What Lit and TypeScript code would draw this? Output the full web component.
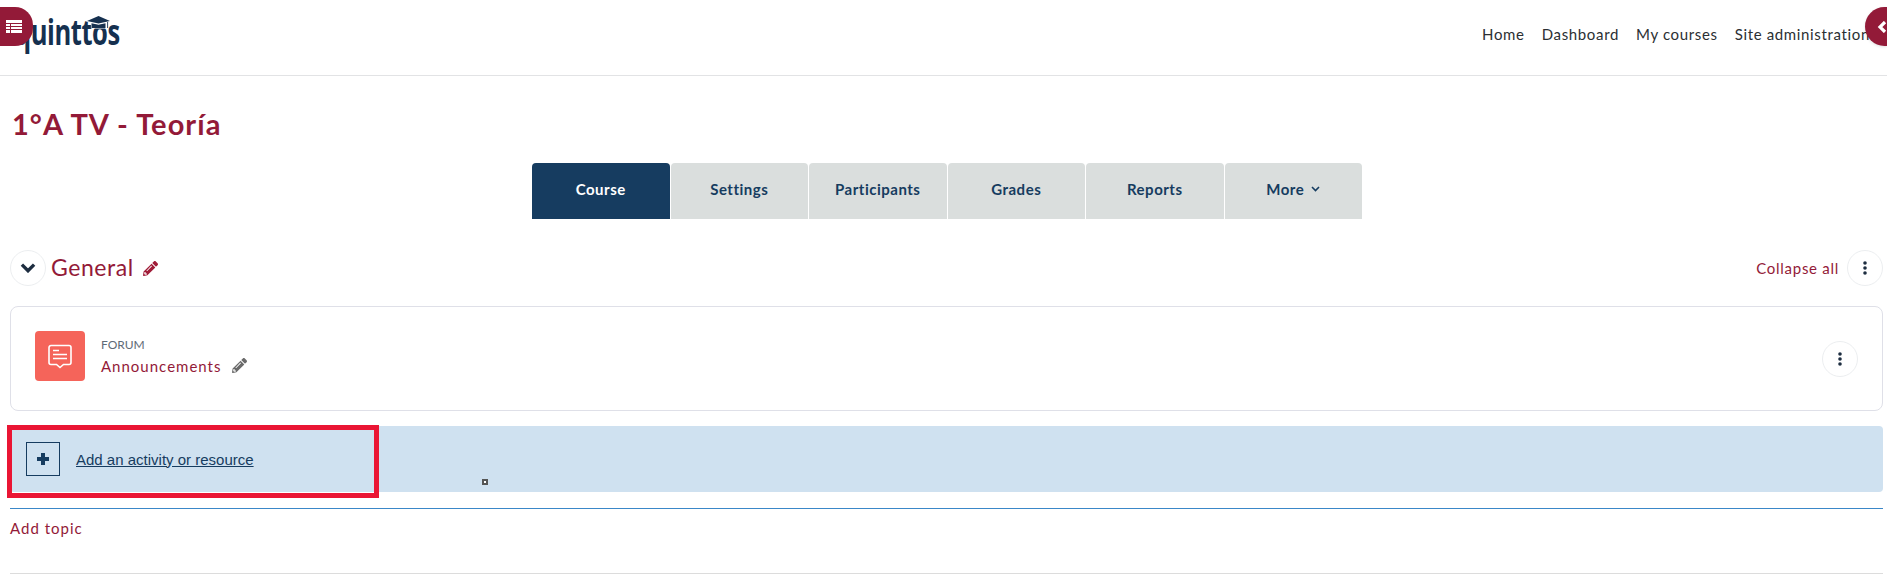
import { LitElement, html, css } from "lit";
import { customElement } from "lit/decorators.js";

const PENCIL = "M497.9 142.1l-46.1 46.1c-4.7 4.7-12.3 4.7-17 0l-111-111c-4.7-4.7-4.7-12.3 0-17l46.1-46.1c18.7-18.7 49.1-18.7 67.9 0l60.1 60.1c18.8 18.7 18.8 49.1 0 67.9zM284.2 99.8L21.6 362.4.4 483.9c-2.9 16.4 11.4 30.6 27.8 27.8l121.5-21.3 262.6-262.6c4.7-4.7 4.7-12.3 0-17l-111-111c-4.8-4.7-12.4-4.7-17.1 0zM124.1 339.9c-5.5-5.5-5.5-14.3 0-19.8l154-154c5.5-5.5 14.3-5.5 19.8 0s5.5 14.3 0 19.8l-154 154c-5.5 5.5-14.3 5.5-19.8 0zM88 424h48v36.3l-64.5 11.3-31.1-31.1L51.7 376H88v48z";

const pencil = (cls: string) => html`<svg class=${cls} viewBox="0 0 512 512" aria-hidden="true"><path fill="currentColor" d=${PENCIL}></path></svg>`;
const kebab = html`<svg class="kebab" viewBox="0 0 4 14" aria-hidden="true"><circle cx="2" cy="2" r="1.8"></circle><circle cx="2" cy="7" r="1.8"></circle><circle cx="2" cy="12" r="1.8"></circle></svg>`;

@customElement("app-root")
export class AppRoot extends LitElement {
  static styles = css`
    :host { display: block; position: relative; width: 1887px; height: 585px; overflow: hidden; background: #fff;
      font-family: "Lato", "Open Sans", sans-serif; color: #2b2f33; }
    .header { display: flex; align-items: center; justify-content: space-between; height: 75px; border-bottom: 1px solid #e2e3e5; box-sizing: content-box; padding: 0 17px 0 15px; }
    .logo { position: relative; width: 104px; height: 40px; margin-top: -12px; }
    .logo-text { display: block; font-family: "Open Sans", sans-serif; font-weight: 700; font-size: 35px; line-height: 40px; color: #15304f; letter-spacing: -0.6px; transform: scaleX(0.73); transform-origin: left center; white-space: nowrap; }
    .hat { position: absolute; left: 72px; top: 4px; width: 23px; height: 15px; overflow: visible; }
    .hat path { stroke: #fff; stroke-width: 1.2px; paint-order: stroke; }
    nav { display: flex; gap: 17px; font-size: 15px; letter-spacing: 0.65px; margin-top: -7px; white-space: nowrap; }
    main { padding: 0 4px 0 10px; }
    h1 { margin: 0; padding: 7px 0 0 2px; box-sizing: border-box; height: 87px; display: flex; align-items: center; font-size: 29px; font-weight: 700; letter-spacing: 1.05px; color: #931a38; }
    .tabs { display: flex; gap: 1px; width: 830px; margin-left: 522px; height: 56px; }
    .tab { flex: 1; display: flex; align-items: center; justify-content: center; gap: 7px; background: #dadedd; color: #163c60; font-weight: 700; font-size: 15px; letter-spacing: 0.5px; border-radius: 4px 4px 0 0; padding-bottom: 4px; box-sizing: border-box; }
    .tab.active { background: #163c60; color: #fff; }
    .chev-sm { width: 9px; height: 6px; }
    .section-head { display: flex; align-items: center; height: 36px; margin-top: 31px; }
    .circle { width: 36px; height: 36px; box-sizing: border-box; border: 1px solid #eceef0; border-radius: 50%; display: flex; align-items: center; justify-content: center; background: #fff; flex: none; }
    .general { margin-left: 5px; font-size: 23px; letter-spacing: 0.55px; color: #931a38; margin-top: -3px; }
    .pencil-red { width: 15px; height: 15px; margin-left: 9px; color: #a01c38; }
    .spacer { flex: 1; }
    .collapse { font-size: 15px; letter-spacing: 0.72px; color: #931a38; margin-right: 8px; }
    .kebab { width: 4px; height: 14px; fill: #1d2d40; }
    .card { display: flex; align-items: center; height: 105px; box-sizing: border-box; margin-top: 20px; border: 1px solid #dfe0e8; border-radius: 8px; padding: 0 24px 5px 24px; }
    .card .circle { margin-top: 5px; }
    .activity { width: 50px; height: 50px; border-radius: 4px; background: #f5645a; display: flex; align-items: center; justify-content: center; flex: none; }
    .activity svg { width: 26px; height: 26px; }
    .info { margin-left: 16px; display: flex; flex-direction: column; gap: 4px; }
    .type { font-size: 12px; line-height: 15px; color: #5f6b76; }
    .title { display: flex; align-items: center; font-size: 15px; line-height: 20px; letter-spacing: 1px; color: #931a38; }
    .pencil-grey { width: 15px; height: 15px; margin-left: 11px; color: #6a6a6a; }
    .add { display: flex; align-items: center; height: 66px; margin-top: 15px; background: #cfe1f0; border-radius: 4px; padding-left: 16px; font-family: "Liberation Sans", Arial, sans-serif; }
    .plus { width: 34px; height: 34px; box-sizing: border-box; border: 1px solid #163c60; display: flex; align-items: center; justify-content: center; }
    .plus svg { width: 14px; height: 14px; }
    .add a { margin-left: 16px; font-size: 15px; color: #163c60; text-decoration: underline; }
    .rule { height: 1px; background: #3a87c8; margin-top: 16px; }
    .add-topic { height: 38px; display: flex; align-items: center; font-size: 15px; letter-spacing: 1px; color: #931a38; }
    .rule2 { height: 1px; background: #dcdcdc; margin-top: 26px; }
    .side { position: absolute; top: 7px; height: 39px; background: #931a38; display: flex; align-items: center; }
    .side.left { left: 0; width: 33px; border-radius: 0 18px 18px 0; padding-left: 6px; box-sizing: border-box; }
    .side.right { right: 0; width: 22px; border-radius: 20px 0 0 20px; padding-left: 12px; box-sizing: border-box; box-shadow: 0 1px 3px rgba(0,0,0,.12); }
    .side.left svg { width: 16px; height: 13px; }
    .side.right svg { width: 10px; height: 12px; flex: none; }
    .highlight { position: absolute; left: 7px; top: 425px; width: 372px; height: 73px; box-sizing: border-box; border: 5px solid #ea1534; }
    .cursor { position: absolute; left: 482px; top: 479px; width: 6px; height: 6px; box-sizing: border-box; border: 2px solid #555; background: #fff; }
  `;

  render() {
    return html`
      <div class="header">
        <div class="logo"><span class="logo-text">quinttos</span>
          <svg class="hat" viewBox="0 0 23 15" aria-hidden="true">
            <path fill="#15304f" d="M11.5 0 23 5l-11.5 2.6L0 5zM4.5 7.2l7 1.6 7-1.6V12H4.5z"></path>
            <rect x="20.2" y="6" width="0.9" height="6" fill="#15304f"></rect>
          </svg>
        </div>
        <nav><span>Home</span><span>Dashboard</span><span>My courses</span><span>Site administration</span></nav>
      </div>
      <main>
        <h1>1°A TV - Teoría</h1>
        <div class="tabs">
          <div class="tab active">Course</div>
          <div class="tab">Settings</div>
          <div class="tab">Participants</div>
          <div class="tab">Grades</div>
          <div class="tab">Reports</div>
          <div class="tab">More
            <svg class="chev-sm" viewBox="0 0 9 6" aria-hidden="true"><path d="M1 1l3.5 3.5L8 1" fill="none" stroke="#163c60" stroke-width="1.6"></path></svg>
          </div>
        </div>
        <div class="section-head">
          <div class="circle">
            <svg width="16" height="10" viewBox="0 0 14 9" aria-hidden="true"><path d="M1.5 1.5 7 7l5.5-5.5" fill="none" stroke="#1d2d40" stroke-width="3"></path></svg>
          </div>
          <span class="general">General</span>
          ${pencil("pencil-red")}
          <span class="spacer"></span>
          <span class="collapse">Collapse all</span>
          <div class="circle">${kebab}</div>
        </div>
        <div class="card">
          <div class="activity">
            <svg viewBox="0 0 26 26" aria-hidden="true" fill="none" stroke="#fff">
              <path stroke-width="1.6" d="M4 2.5h18a2 2 0 0 1 2 2v15a2 2 0 0 1-2 2h-5.5L13 24.5l-3.5-3H4a2 2 0 0 1-2-2v-15a2 2 0 0 1 2-2z"></path>
              <path stroke-width="1.6" d="M6 7.5h6M6 11.5h14M6 15.5h14"></path>
            </svg>
          </div>
          <div class="info">
            <span class="type">FORUM</span>
            <span class="title">Announcements ${pencil("pencil-grey")}</span>
          </div>
          <span class="spacer"></span>
          <div class="circle">${kebab}</div>
        </div>
        <div class="add">
          <div class="plus">
            <svg viewBox="0 0 14 14" aria-hidden="true"><path d="M7 1v12M1 7h12" stroke="#163c60" stroke-width="4"></path></svg>
          </div>
          <a>Add an activity or resource</a>
        </div>
        <div class="rule"></div>
        <div class="add-topic">Add topic</div>
        <div class="rule2"></div>
      </main>
      <div class="side left">
        <svg viewBox="0 0 16 13" aria-hidden="true"><path fill="#fff" d="M0 0h16v13H0z"></path><path stroke="#931a38" stroke-width="1" d="M0 3.5h16M0 6.5h16M0 9.5h16M4.5 3v10"></path></svg>
      </div>
      <div class="side right">
        <svg viewBox="0 0 10 12" aria-hidden="true"><path d="M8 1 3 6l5 5" fill="none" stroke="#fff" stroke-width="3.2"></path></svg>
      </div>
      <div class="highlight"></div>
      <div class="cursor"></div>
    `;
  }
}
